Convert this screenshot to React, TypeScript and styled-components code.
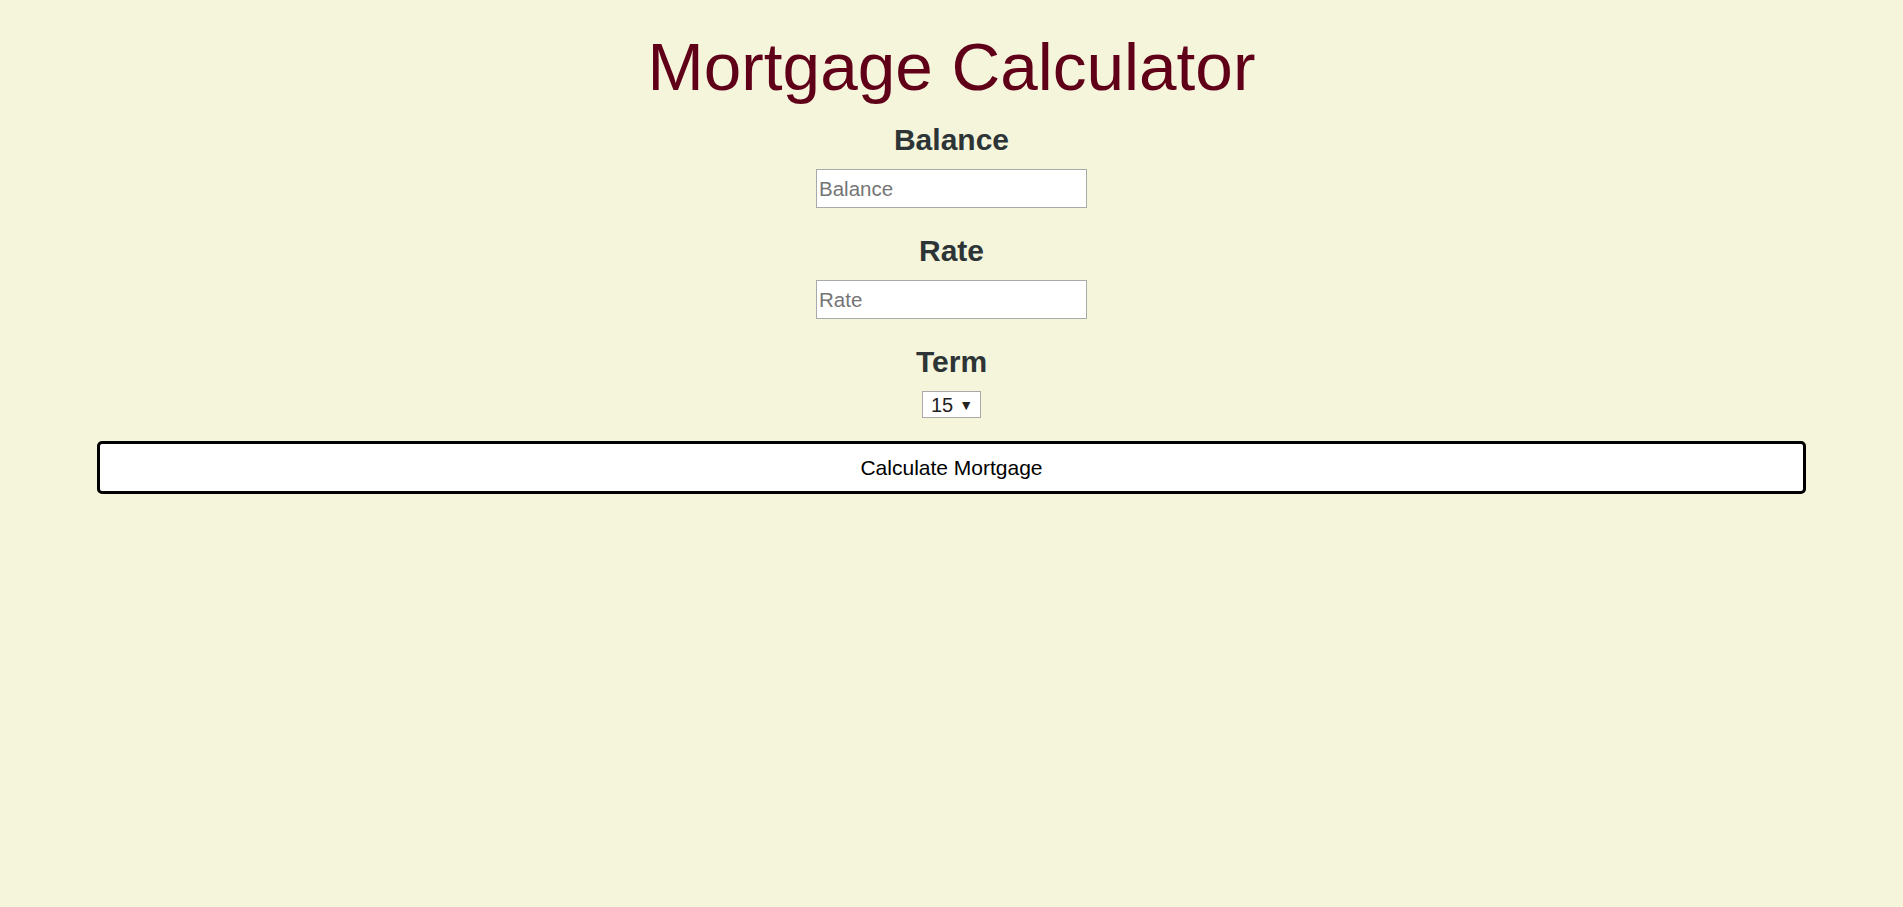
import React, { useState } from "react";
import styled, { createGlobalStyle } from "styled-components";

const GlobalStyle = createGlobalStyle`
    html, body {
        margin: 0;
        padding: 0;
        background: #f5f5dc;
        font-family: "Liberation Sans", Arial, sans-serif;
    }
    body {
        min-height: 100vh;
    }
`

const PageDivStyled = styled.div`
    display: flex;
    flex-direction: column;
    align-items: center;
    padding: 27px 97px 0;
    min-height: 100vh;
    box-sizing: border-box;
`

const TitleStyled = styled.h1`
    margin: 0 0 16px;
    font-size: 67.5px;
    line-height: 80px;
    font-weight: normal;
    color: #600018;
`

const FieldDivStyled = styled.div`
    display: flex;
    flex-direction: column;
    align-items: center;
    margin-bottom: 26px;
`

const LabelStyled = styled.label`
    margin-bottom: 12px;
    font-size: 30px;
    line-height: 34px;
    font-weight: bold;
    color: #2d3436;
`

const InputStyled = styled.input`
    width: 271px;
    height: 39px;
    box-sizing: border-box;
    padding: 1px 2px;
    border: 1px solid #a9a9a9;
    background: #ffffff;
    font-family: "Liberation Sans", Arial, sans-serif;
    font-size: 20.5px;
    color: #222;
    outline: none;

    &::placeholder {
        color: #757575;
    }
`

const SelectWrapStyled = styled.div`
    position: relative;
    width: 59px;
    height: 27px;
`

const SelectStyled = styled.select`
    appearance: none;
    width: 100%;
    height: 100%;
    box-sizing: border-box;
    padding: 0 0 0 8px;
    border: 1px solid #a9a9a9;
    border-radius: 0;
    background: #ffffff;
    font-family: "Liberation Sans", Arial, sans-serif;
    font-size: 20px;
    color: #222;
    outline: none;
`

const ArrowStyled = styled.span`
    position: absolute;
    right: 8px;
    top: 50%;
    transform: translateY(-50%);
    font-size: 14px;
    line-height: 1;
    color: #222;
    pointer-events: none;
`

const ButtonStyled = styled.button`
    align-self: stretch;
    margin-top: -3px;
    height: 53px;
    border: 3px solid #000000;
    border-radius: 5px;
    background: #ffffff;
    font-family: "Liberation Sans", Arial, sans-serif;
    font-size: 21px;
    color: #000000;
    cursor: pointer;
`

const App: React.FC = () => {
    const [balance, setBalance] = useState("");
    const [rate, setRate] = useState("");
    const [term, setTerm] = useState("15");

    return (
        <>
            <GlobalStyle />
            <PageDivStyled>
                <TitleStyled>Mortgage Calculator</TitleStyled>
                <FieldDivStyled>
                    <LabelStyled htmlFor="balance">Balance</LabelStyled>
                    <InputStyled
                        id="balance"
                        placeholder="Balance"
                        value={balance}
                        onChange={(e) => setBalance(e.target.value)}
                    />
                </FieldDivStyled>
                <FieldDivStyled>
                    <LabelStyled htmlFor="rate">Rate</LabelStyled>
                    <InputStyled
                        id="rate"
                        placeholder="Rate"
                        value={rate}
                        onChange={(e) => setRate(e.target.value)}
                    />
                </FieldDivStyled>
                <FieldDivStyled>
                    <LabelStyled htmlFor="term">Term</LabelStyled>
                    <SelectWrapStyled>
                        <SelectStyled id="term" value={term} onChange={(e) => setTerm(e.target.value)}>
                            <option value="15">15</option>
                            <option value="30">30</option>
                        </SelectStyled>
                        <ArrowStyled>▼</ArrowStyled>
                    </SelectWrapStyled>
                </FieldDivStyled>
                <ButtonStyled>Calculate Mortgage</ButtonStyled>
            </PageDivStyled>
        </>
    )
}

export default App;
